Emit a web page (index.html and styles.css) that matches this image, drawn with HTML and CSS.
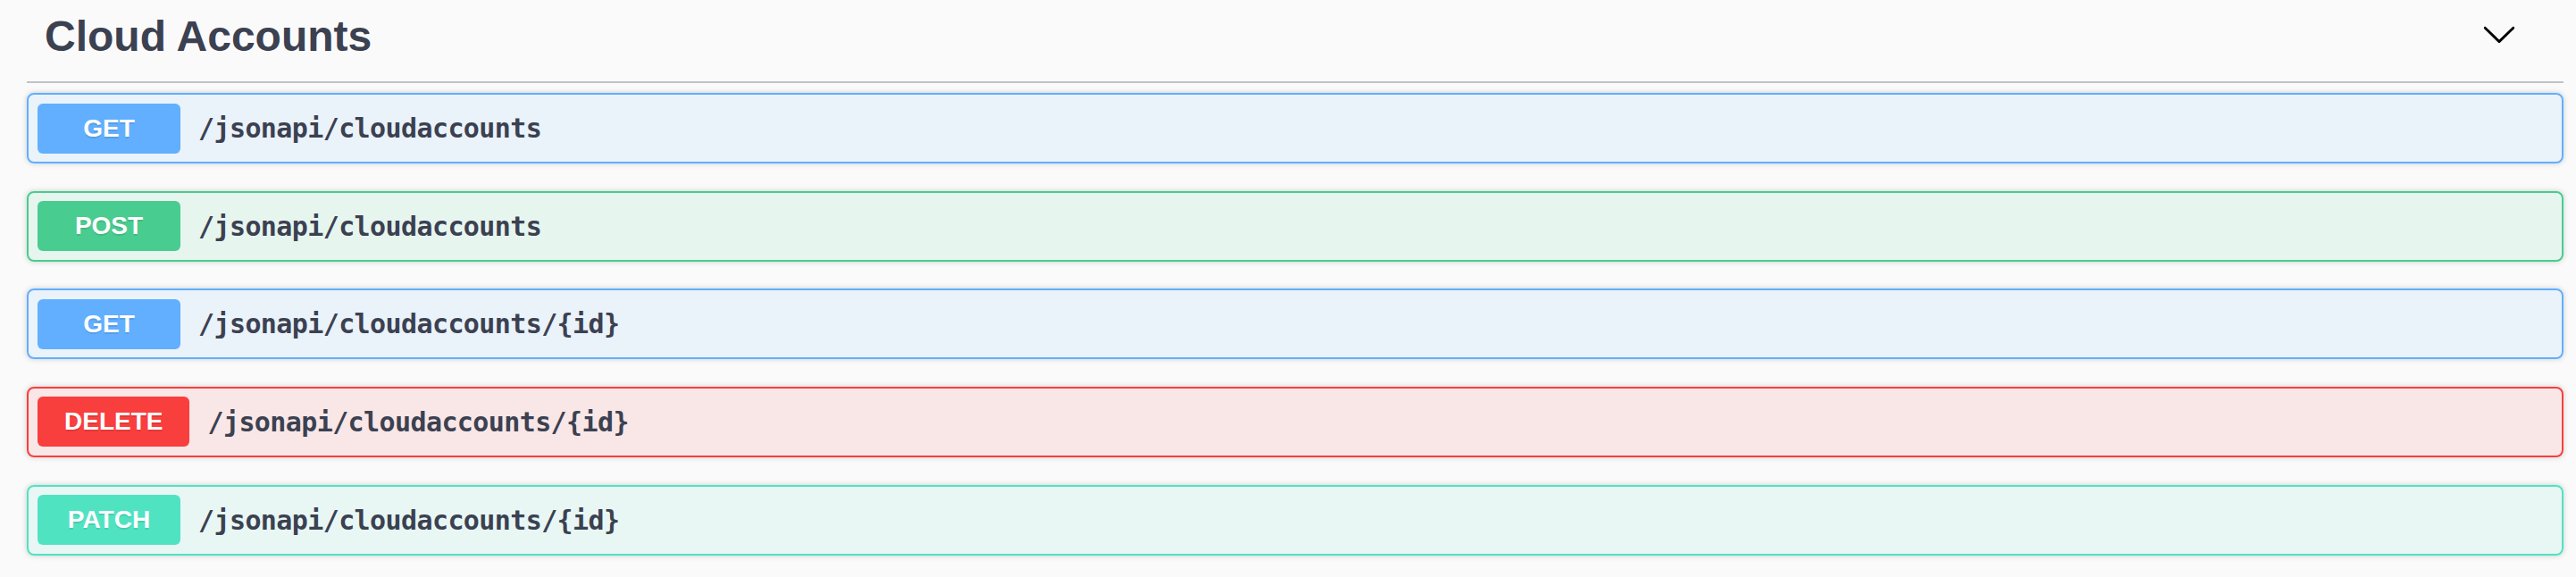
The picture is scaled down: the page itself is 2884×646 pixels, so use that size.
FILE: index.html
```html
<!DOCTYPE html>
<html lang="en">
<head>
<meta charset="utf-8">
<title>Cloud Accounts</title>
<link rel="stylesheet" href="styles.css">
</head>
<body>
<div class="wrapper">
  <section class="tag-section">
    <h3 class="tag-header">
      <span class="tag-title">Cloud Accounts</span>
      <button class="expand" aria-label="collapse">
        <svg width="40" height="40" viewBox="0 0 20 20"><path d="M17.418 6.109c.272-.268.709-.268.979 0s.271.701 0 .969l-7.908 7.83c-.27.268-.707.268-.979 0l-7.908-7.83c-.27-.268-.27-.701 0-.969.271-.268.709-.268.979 0L10 13.25l7.418-7.141z"/></svg>
      </button>
    </h3>
    <div class="ops">
      <div class="op op-get"><span class="method">GET</span><span class="path">/jsonapi/cloudaccounts</span></div>
      <div class="op op-post"><span class="method">POST</span><span class="path">/jsonapi/cloudaccounts</span></div>
      <div class="op op-get"><span class="method">GET</span><span class="path">/jsonapi/cloudaccounts/{id}</span></div>
      <div class="op op-delete"><span class="method">DELETE</span><span class="path">/jsonapi/cloudaccounts/{id}</span></div>
      <div class="op op-patch"><span class="method">PATCH</span><span class="path">/jsonapi/cloudaccounts/{id}</span></div>
    </div>
  </section>
</div>
</body>
</html>
```

FILE: styles.css
```css
html, body {
  margin: 0;
  padding: 0;
  background: #fafafa;
}

.wrapper {
  padding: 0 14px 0 30px;
}

.tag-header {
  display: flex;
  align-items: center;
  margin: 0 0 11px 0;
  padding: 13px 52px 23px 20px;
  border-bottom: 2px solid rgba(59, 65, 81, 0.3);
}

.tag-title {
  flex: 1;
  font-family: "Liberation Sans", Arial, sans-serif;
  font-size: 48px;
  line-height: 55px;
  font-weight: 700;
  color: #3b4151;
}

.expand {
  display: flex;
  border: none;
  background: none;
  padding: 0;
  margin: 0 0 6px 0;
}

.expand svg {
  display: block;
  fill: #000;
}

.op {
  display: flex;
  align-items: center;
  box-sizing: border-box;
  height: 79px;
  padding: 0 10px;
  margin-bottom: 30.67px;
  border: 2px solid;
  border-radius: 8px;
  box-shadow: 0 0 6px rgba(0, 0, 0, 0.19);
}

.method {
  box-sizing: border-box;
  min-width: 160px;
  padding: 12px 30px;
  border-radius: 6px;
  text-align: center;
  font-family: "Liberation Sans", Arial, sans-serif;
  font-size: 28px;
  line-height: 32px;
  font-weight: 700;
  color: #fff;
  text-shadow: 0 2px 0 rgba(0, 0, 0, 0.1);
}

.path {
  padding: 0 20px;
  font-family: "DejaVu Sans Mono", monospace;
  font-size: 30px;
  font-weight: 700;
  letter-spacing: -0.6px;
  color: #3b4151;
}

.op-get { border-color: #61affe; background: rgba(97, 175, 254, 0.1); }
.op-get .method { background: #61affe; }

.op-post { border-color: #49cc90; background: rgba(73, 204, 144, 0.1); }
.op-post .method { background: #49cc90; }

.op-delete { border-color: #f93e3e; background: rgba(249, 62, 62, 0.1); }
.op-delete .method { background: #f93e3e; }

.op-patch { border-color: #50e3c2; background: rgba(80, 227, 194, 0.1); }
.op-patch .method { background: #50e3c2; }
```
